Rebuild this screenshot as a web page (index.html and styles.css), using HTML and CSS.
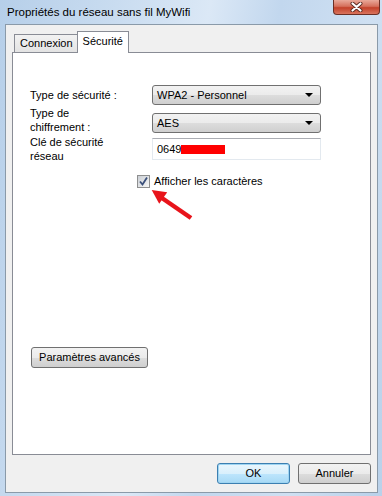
FILE: index.html
```html
<!DOCTYPE html>
<html lang="fr">
<head>
<meta charset="utf-8">
<title>Propriétés du réseau sans fil MyWifi</title>
<link rel="stylesheet" href="styles.css">
</head>
<body>
<div class="window">
  <div class="titlebar">
    <span class="title">Propriétés du réseau sans fil MyWifi</span>
    <span class="close">
      <svg width="17" height="10" viewBox="0 0 17 10"><path d="M4.5 1.5 L12.5 8.5 M12.5 1.5 L4.5 8.5" stroke="#5a2a20" stroke-width="4" stroke-linecap="round"/><path d="M4.5 1.5 L12.5 8.5 M12.5 1.5 L4.5 8.5" stroke="#ffffff" stroke-width="2.2" stroke-linecap="round"/></svg>
    </span>
  </div>
  <div class="client">
    <div class="tabs">
      <div class="tab">Connexion</div>
      <div class="tab active">Sécurité</div>
    </div>
    <div class="panel">
      <div class="form">
        <div class="label">Type de sécurité :</div>
        <div class="combo c1"><span>WPA2 - Personnel</span><i class="caret"></i></div>
        <div class="label top">Type de<br>chiffrement :</div>
        <div class="combo c2"><span>AES</span><i class="caret"></i></div>
        <div class="label top">Clé de sécurité<br>réseau</div>
        <div class="field"><span>0649</span><span class="redact"></span></div>
      </div>
      <div class="check-row">
        <span class="checkbox">
          <svg width="11" height="11" viewBox="0 0 11 11"><path d="M2 5.5 L4.5 8.5 L9 1.5" fill="none" stroke="#3a4f7a" stroke-width="1.8"/></svg>
        </span>
        <span class="check-label">Afficher les caractères</span>
      </div>
      <button class="btn adv">Paramètres avancés</button>
    </div>
    <div class="actions">
      <button class="btn ok">OK</button>
      <button class="btn">Annuler</button>
    </div>
  </div>
  <svg class="arrow" width="50" height="40" viewBox="0 0 50 40">
    <line x1="46" y1="33" x2="14" y2="11" stroke="#e8141b" stroke-width="4.5"/>
    <polygon points="6.7,5 14.2,18.7 22.2,7.3" fill="#e8141b"/>
  </svg>
</div>
</body>
</html>
```

FILE: styles.css
```css
* { box-sizing: border-box; }
html, body { margin: 0; padding: 0; }
body {
  width: 382px;
  height: 496px;
  overflow: hidden;
  font-family: "Liberation Sans", Arial, sans-serif;
  font-size: 11px;
  line-height: 14px;
  color: #000;
}
.window {
  position: relative;
  width: 382px;
  height: 496px;
  display: flex;
  flex-direction: column;
  background: linear-gradient(100deg, #b6cfe9 0%, #c9dcf0 25%, #dbe8f6 45%, #c2d7ee 60%, #cfe0f2 80%, #b9d1ea 100%);
}
.titlebar {
  height: 24px;
  display: flex;
  align-items: flex-start;
  justify-content: space-between;
  flex: none;
}
.title {
  margin: 5px 0 0 7px;
  font-size: 11.5px;
  line-height: 15px;
}
.close {
  width: 47px;
  height: 15px;
  margin-right: 2px;
  border: 1px solid #6b2f25;
  border-top: none;
  border-radius: 0 0 4px 4px;
  background: linear-gradient(#e9a99a 0%, #d5705c 45%, #c3412a 55%, #d9745e 100%);
  display: flex;
  align-items: center;
  justify-content: center;
}
.close svg { display: block; }
.client {
  flex: 1;
  margin: 0 4px 4px 5px;
  background: #f0f0f0;
  border: 1px solid #8a9aa9;
  padding: 6px 6px 8px 6px;
  display: flex;
  flex-direction: column;
}
.tabs {
  display: flex;
  align-items: flex-end;
  padding-left: 2px;
  height: 21px;
  position: relative;
  z-index: 1;
}
.tab {
  height: 18px;
  padding: 0 4px 0 5px;
  border: 1px solid #898c95;
  border-bottom: none;
  border-right: none;
  background: linear-gradient(#f2f2f2, #e3e3e3);
  line-height: 17px;
}
.tab.active {
  height: 22px;
  margin-bottom: -1px;
  background: #fff;
  border-right: 1px solid #898c95;
  line-height: 18px;
  padding: 0 5px 0 5px;
}
.panel {
  height: 403px;
  background: #fff;
  border: 1px solid #898c95;
  padding: 32px 0 0 17px;
  display: flex;
  flex-direction: column;
  align-items: flex-start;
}
.form {
  display: grid;
  grid-template-columns: 122px 169px;
  grid-template-rows: 20px 28px 28px;
  row-gap: 1px;
}
.label { align-self: center; }
.label.top { align-self: start; }
.combo {
  height: 20px;
  border: 1px solid #707070;
  border-radius: 3px;
  background: linear-gradient(#f2f2f2 0%, #ebebeb 50%, #dddddd 50%, #cfcfcf 100%);
  display: flex;
  align-items: center;
  justify-content: space-between;
  padding: 0 7px 0 4px;
}
.combo.c2 { align-self: end; margin-bottom: 1px; }
.caret {
  width: 0;
  height: 0;
  border-left: 4px solid transparent;
  border-right: 4px solid transparent;
  border-top: 4px solid #000;
}
.field {
  align-self: center;
  height: 22px;
  border: 1px solid #e3e9ef;
  border-top-color: #abadb3;
  background: #fff;
  display: flex;
  align-items: center;
  padding-left: 4px;
}
.redact {
  display: inline-block;
  width: 44px;
  height: 9px;
  background: #ff0000;
  margin-top: 1px;
}
.check-row {
  display: flex;
  align-items: center;
  margin: 11px 0 0 107px;
}
.checkbox {
  width: 13px;
  height: 13px;
  border: 1px solid #8e8f8f;
  background: linear-gradient(135deg, #cbcfd5, #f6f6f6);
  display: flex;
  align-items: center;
  justify-content: center;
}
.checkbox svg { display: block; }
.check-label { margin-left: 4px; }
.btn {
  font: inherit;
  font-size: 11px;
  color: #000;
  height: 21px;
  border: 1px solid #707070;
  border-radius: 3px;
  background: linear-gradient(#f2f2f2 0%, #ebebeb 50%, #dddddd 50%, #cfcfcf 100%);
  padding: 0;
  line-height: 17px;
}
.adv {
  width: 117px;
  margin: 159px 0 0 1px;
}
.actions {
  display: flex;
  justify-content: flex-end;
  gap: 8px;
  margin-top: 8px;
}
.actions .btn { width: 73px; }
.btn.ok {
  border-color: #3c7fb1;
  background: linear-gradient(#eaf6fd 0%, #d9f0fc 50%, #bee6fd 50%, #a7d9f5 100%);
  box-shadow: inset 0 0 0 1px #9fd5f2;
}
.arrow {
  position: absolute;
  left: 145px;
  top: 185px;
}
```
